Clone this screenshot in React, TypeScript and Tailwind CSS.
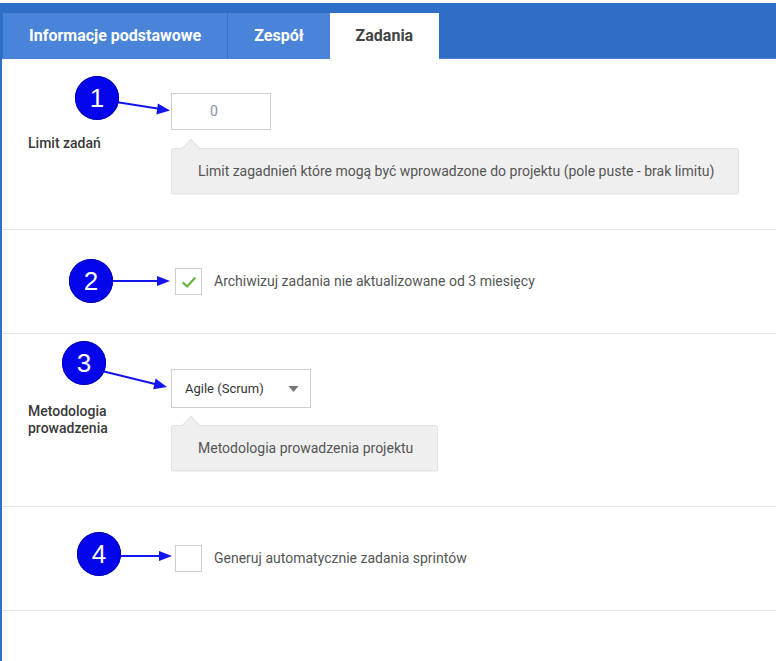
import { useState } from "react";

const tabs = ["Informacje podstawowe", "Zespół", "Zadania"];

const Hint = ({ text, width }: { text: string; width: string }) => (
  <div
    className={`relative flex h-[46px] items-center rounded-[2px] border border-[#e2e2e2] bg-[#efefef] pl-[26px] text-[14px] text-[#555] shadow-[0_1px_1px_rgba(0,0,0,0.06)] ${width}`}
  >
    <span className="absolute -top-[7px] left-[12px] h-[14px] w-[14px] rotate-45 border-l border-t border-[#e2e2e2] bg-[#efefef]" />
    <span className="relative">{text}</span>
  </div>
);

const Check = ({ checked, label }: { checked: boolean; label: string }) => (
  <div className="flex items-center gap-[12px] pl-[4px]">
    <div className="grid h-[27px] w-[27px] place-items-center border border-[#cfcfcf] bg-white">
      {checked && (
        <svg viewBox="0 0 20 20" className="h-[18px] w-[18px]">
          <path
            d="M3 10.5 L8 15 L17 5"
            fill="none"
            stroke="#6cb34a"
            strokeWidth="2.6"
            strokeLinejoin="round"
          />
        </svg>
      )}
    </div>
    <span className="text-[14px] text-[#555]">{label}</span>
  </div>
);

const Marker = ({ n, className }: { n: number; className: string }) => (
  <div
    className={`absolute grid h-[44px] w-[44px] place-items-center rounded-full bg-[#0505ec] font-['Liberation_Sans',Arial,sans-serif] text-[26px] leading-none text-white shadow-[inset_0_0_0_1px_#0000b0] ${className}`}
  >
    {n}
  </div>
);

export default function App() {
  const [active] = useState(2);

  return (
    <div className="relative h-[661px] w-[776px] overflow-hidden bg-white pt-[3px] font-['Roboto','Open_Sans',sans-serif]">
      <div className="h-[658px] border-l-2 border-[#2f6ec6]">
        {/* Tabs */}
        <div className="flex h-[56px] items-end border-b border-[#4d86d9] bg-[#2f6ec6] pl-px">
          {tabs.map((t, i) => (
            <div
              key={t}
              className={`-mb-px flex h-[46px] items-center px-[26px] text-[16px] font-bold ${
                i === active
                  ? "bg-white text-[#444]"
                  : "bg-[#4a84d8] text-white"
              } ${i === 0 ? "border-r border-[#3571c9]" : ""}`}
            >
              {t}
            </div>
          ))}
        </div>

        {/* Limit zadań */}
        <div className="flex border-b border-[#e6e6e6] pt-[34px] pb-[35px]">
          <div className="flex w-[169px] items-center pl-[26px] text-[14px] font-medium text-[#3a3a3a]">
            Limit zadań
          </div>
          <div className="flex flex-col gap-[18px]">
            <div className="flex h-[37px] w-[100px] items-center border border-[#cfcfcf] pl-[38px] text-[14px] text-[#8393a8]">
              0
            </div>
            <Hint
              width="w-[568px]"
              text="Limit zagadnień które mogą być wprowadzone do projektu (pole puste - brak limitu)"
            />
          </div>
        </div>

        {/* Archiwizacja */}
        <div className="flex border-b border-[#e6e6e6] py-[38px]">
          <div className="w-[169px]" />
          <Check checked label="Archiwizuj zadania nie aktualizowane od 3 miesięcy" />
        </div>

        {/* Metodologia */}
        <div className="flex border-b border-[#e6e6e6] pt-[35px] pb-[35px]">
          <div className="flex w-[169px] items-center pl-[26px] text-[14px] font-medium leading-[17px] text-[#3a3a3a]">
            Metodologia
            <br />
            prowadzenia
          </div>
          <div className="flex flex-col gap-[17px]">
            <div className="flex h-[39px] w-[140px] items-center justify-between border border-[#cfcfcf] pl-[13px] pr-[11px] text-[13px] text-[#333]">
              <span>Agile (Scrum)</span>
              <svg viewBox="0 0 10 6" className="h-[6px] w-[11px]">
                <polygon points="0,0 10,0 5,6" fill="#777" />
              </svg>
            </div>
            <Hint width="w-[267px]" text="Metodologia prowadzenia projektu" />
          </div>
        </div>

        {/* Sprinty */}
        <div className="flex border-b border-[#e6e6e6] py-[38px]">
          <div className="w-[169px]" />
          <Check checked={false} label="Generuj automatycznie zadania sprintów" />
        </div>
      </div>

      {/* Annotations */}
      <svg
        className="pointer-events-none absolute inset-0"
        width="776"
        height="661"
        viewBox="0 0 776 661"
      >
        <g stroke="#1414ee" strokeWidth="2" fill="#1414ee">
          <line x1="116" y1="102" x2="159" y2="108.8" />
          <polygon points="170,110.5 156.4,114.4 157.9,103.6" stroke="none" />
          <line x1="111" y1="281" x2="159" y2="281" />
          <polygon points="170,281 157,276 157,286" stroke="none" />
          <line x1="104" y1="371.5" x2="156" y2="384.3" />
          <polygon points="167,387 153.2,389.3 155.6,378.5" stroke="none" />
          <line x1="119" y1="556" x2="160" y2="556" />
          <polygon points="172,556 159,551 159,561" stroke="none" />
        </g>
      </svg>
      <Marker n={1} className="left-[75px] top-[76px]" />
      <Marker n={2} className="left-[69px] top-[259px]" />
      <Marker n={3} className="left-[62px] top-[341px]" />
      <Marker n={4} className="left-[77px] top-[532px]" />
    </div>
  );
}
